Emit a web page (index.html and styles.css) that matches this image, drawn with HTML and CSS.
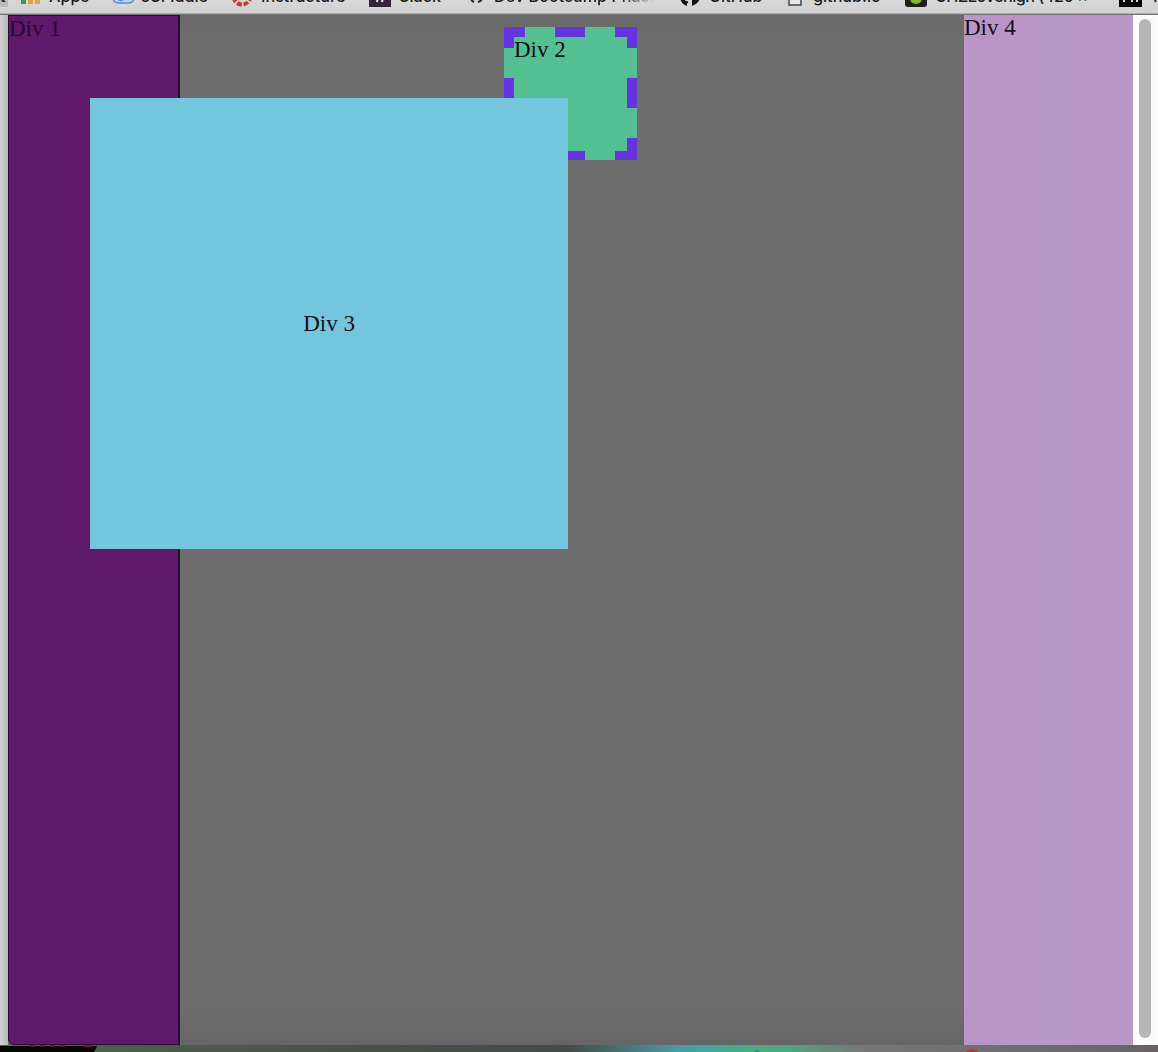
FILE: index.html
```html
<!DOCTYPE html>
<html lang="en">
<head>
<meta charset="utf-8">
<title>Positioning divs</title>
<link rel="stylesheet" href="styles.css">
</head>
<body>
<div class="window">
  <nav class="bookmarks">
    <div class="bookmark edge"><span class="label">t</span></div>
    <div class="bookmark"><svg class="icon" width="29" height="22" viewBox="0 0 29 22"><path fill="#429452" d="M1 13h5v6H1z"/><path fill="#e3a33f" d="M8 13h5v6H8zM15 13h5v6h-5z"/></svg><span class="label">Apps</span></div>
    <div class="bookmark"><svg class="icon" width="29" height="22" viewBox="0 0 29 22"><rect x="1" y="3" width="21" height="15" rx="5" fill="#bcd3ee" stroke="#558dde" stroke-width="1.5"/><path d="M6 14q3 3 5.500 0t5.500 0" fill="none" stroke="#558dde" stroke-width="1.500"/></svg><span class="label">JSFiddle</span></div>
    <div class="bookmark"><svg class="icon" width="29" height="22" viewBox="0 0 29 22"><circle cx="10" cy="11" r="8.5" fill="none" stroke="#cd3a34" stroke-width="4" stroke-dasharray="5 1.7"/></svg><span class="label">Instructure</span></div>
    <div class="bookmark"><svg class="icon" width="30" height="22" viewBox="0 0 30 22"><path fill="#35263a" d="M0 0h22v22H0z"/><path stroke="#eee" stroke-width="2" d="M10 7l-2 10M15 7l-2 10M6 13h11"/></svg><span class="label">Slack</span></div>
    <div class="bookmark"><svg class="icon" width="26" height="22" viewBox="0 0 26 22"><path fill="none" stroke="#242424" stroke-width="2" d="M3 10v3q0 3 3 4M14 10v3q0 3-4 4"/></svg><span class="label phase">Dev Bootcamp Phase</span></div>
    <div class="bookmark"><svg class="icon" width="29" height="22" viewBox="0 0 29 22"><path fill="#111" d="M0 10h7v3q-4 2 0 4v4Q0 19 0 10zM12 21v-6q3-1 2-4h6q0 7-8 10z"/><path fill="none" stroke="#111" stroke-width="2" d="M3 14q1 4 5 3"/></svg><span class="label">GitHub</span></div>
    <div class="bookmark"><svg class="icon" width="25" height="22" viewBox="0 0 25 22"><path fill="#e8e8e8" stroke="#444" stroke-width="1.5" d="M1 3h12v17H1z"/></svg><span class="label">github.io</span></div>
    <div class="bookmark"><svg class="icon" width="30" height="22" viewBox="0 0 30 22"><rect y="-2" width="22" height="24" rx="3" fill="#1e211c"/><circle cx="11" cy="13" r="6" fill="#87b52d"/></svg><span class="label tight">CHZLovenigh (420 ×</span></div>
    <div class="bookmark"><svg class="icon" width="31" height="22" viewBox="0 0 31 22"><path d="M0 0h23v22H0z"/><path d="M5 17V5l4 8 4-8v12M18 14v3" fill="none" stroke="#ddd" stroke-width="2"/></svg><span class="label">T</span></div>
  </nav>
  <main class="page">
    <div class="gutter"></div>
    <div class="div1">Div 1</div>
    <div class="middle">
      <div class="div2">Div 2
        <svg class="dashes" width="133" height="133" viewBox="0 0 133 133"><path fill="#6634dc" d="M0 0h21v10H10v11H0zM51 0h30v10H51zM111 0h22v21h-10V10h-12zM0 51h10v30H0zM123 51h10v30h-10zM0 111h10v13h11v9H0zM51 124h30v9H51zM123 111h10v22h-22v-9h12z"/></svg>
      </div>
      <div class="div3">Div 3</div>
    </div>
    <div class="div4">Div 4</div>
    <div class="scrollbar"><div class="thumb"></div></div>
  </main>
  <footer class="behind">
    <svg class="behind-art" width="1158" height="7" viewBox="0 0 1158 7"><path fill="#030806" d="M0 1h97l-3 6H0z"/><path stroke="#631522" stroke-width="2" stroke-dasharray="5 5" d="M30 1h38"/><path fill="#801529" d="M84 0h8v2h-8z"/><path fill="#bd302c" d="M965 7q7-5 14 0z"/><path fill="#31767c" d="M754 7l3-2 3 2z"/></svg>
  </footer>
</div>
</body>
</html>
```
FILE: styles.css
```css
* { box-sizing: border-box; }
body {
  margin: 0;
  overflow: hidden;
  color: #101018;
  font: 23px/26px "Liberation Serif", "Times New Roman", serif;
}
.window {
  display: flex;
  flex-direction: column;
  width: 1158px;
  height: 1052px;
  overflow: hidden;
}
.bookmarks {
  display: grid;
  grid-template-columns: 20px 92px 120px 137px 99px 212px 108px 117px 214px 39px;
  height: 15px;
  overflow: hidden;
  background: linear-gradient(#d8d8d8, #d1d1d1 13px, #858585 14px, #626262);
}
.bookmark {
  display: flex;
  height: 22px;
  margin-top: -15px;
  white-space: nowrap;
  font: 500 16.2px/22px Inter, "Liberation Sans", sans-serif;
  color: #1c1c1c;
}
.edge {
  width: 8px;
  background: #bcbcbc;
}
.icon { flex: none; }
.tight { letter-spacing: -0.5px; }
.phase {
  width: 161px;
  overflow: hidden;
  -webkit-mask-image: linear-gradient(90deg, #000 125px, transparent);
  mask-image: linear-gradient(90deg, #000 125px, transparent);
}
.page {
  display: grid;
  grid-template-columns: 8px 172px 784px 169px 25px;
  height: 1030px;
  background: #6c6c6c;
}
.gutter { background: linear-gradient(90deg, #d1d0d2, #b8b7ba); }
.div1 {
  border: 1px solid #25102d;
  border-right-width: 2px;
  border-bottom-left-radius: 6px;
  background: #5e196c;
  color: #240b2d;
}
.middle {
  position: relative;
  background: linear-gradient(#686868, #6d6d6d 20px, #6d6d6d 990px, #676567);
}
.div2 {
  position: relative;
  width: 133px;
  height: 133px;
  margin: 12px 0 0 324px;
  padding: 10px;
  background: #54bf93;
}
.dashes {
  position: absolute;
  inset: 0;
}
.div3 {
  position: absolute;
  left: -90px;
  top: 83px;
  display: grid;
  place-items: center;
  width: 478px;
  height: 451px;
  background: #74c6df;
}
.div4 {
  background: linear-gradient(90deg, #b995c8, #b896c5 45%, #ba96c8);
}
.scrollbar {
  padding: 4px 7px 7px 6px;
  background: linear-gradient(90deg, #fff, #f8f8f8 20px, #fff);
}
.thumb {
  width: 12px;
  height: 1019px;
  border-radius: 6px;
  background: #b5b5b5;
}
.behind {
  height: 7px;
  background: linear-gradient(90deg, #526157, #454e47 430px, #434d48 570px, #4b9ca5 680px, #4fa980 755px, #50a57d 790px, #777 860px, #686268);
}
.behind-art { display: block; }
```
